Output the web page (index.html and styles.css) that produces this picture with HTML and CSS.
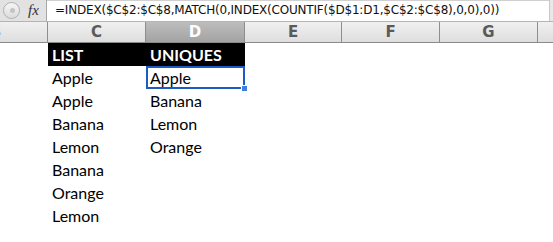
FILE: index.html
```html
<!DOCTYPE html>
<html lang="en">
<head>
  <meta charset="UTF-8">
  <title>Unique values formula</title>
  <link rel="stylesheet" href="styles.css">
</head>
<body>
  <div class="formula-bar">
    <div class="tools">
      <span class="cancel"><span class="dot"></span></span>
      <span class="fx">fx</span>
    </div>
    <div class="formula">=INDEX($C$2:$C$8,MATCH(0,INDEX(COUNTIF($D$1:D1,$C$2:$C$8),0,0),0))</div>
    <div class="edge"></div>
  </div>
  <div class="col-headers">
    <div class="col-head col-b">B</div>
    <div class="col-head col-c">C</div>
    <div class="col-head col-d selected">D</div>
    <div class="col-head col-e">E</div>
    <div class="col-head col-f">F</div>
    <div class="col-head col-g">G</div>
    <div class="col-head col-h"></div>
  </div>
  <div class="sheet">
    <div class="cell"></div><div class="cell head">LIST</div><div class="cell head">UNIQUES</div><div class="cell rest"></div>
    <div class="cell"></div><div class="cell">Apple</div><div class="cell active">Apple<span class="handle"></span></div><div class="cell rest"></div>
    <div class="cell"></div><div class="cell">Apple</div><div class="cell">Banana</div><div class="cell rest"></div>
    <div class="cell"></div><div class="cell">Banana</div><div class="cell">Lemon</div><div class="cell rest"></div>
    <div class="cell"></div><div class="cell">Lemon</div><div class="cell">Orange</div><div class="cell rest"></div>
    <div class="cell"></div><div class="cell">Banana</div><div class="cell"></div><div class="cell rest"></div>
    <div class="cell"></div><div class="cell">Orange</div><div class="cell"></div><div class="cell rest"></div>
    <div class="cell"></div><div class="cell">Lemon</div><div class="cell"></div><div class="cell rest"></div>
  </div>
</body>
</html>
```

FILE: styles.css
```css
body {
  margin: 0;
  background: #fff;
  overflow: hidden;
}
.formula-bar {
  display: flex;
  height: 21px;
  border-bottom: 1px solid #b4b4b4;
  background: #e2e2e2;
}
.tools {
  width: 46px;
  display: flex;
  align-items: center;
  border-right: 1px solid #a8a8a8;
}
.cancel {
  width: 15px;
  height: 15px;
  margin-left: 3px;
  border: 1px solid #b0b0b0;
  border-radius: 50%;
  background: linear-gradient(#f6f6f6, #dcdcdc);
  display: flex;
  align-items: center;
  justify-content: center;
}
.cancel .dot {
  width: 5px;
  height: 5px;
  border-radius: 50%;
  background: #c4c4c4;
  margin-left: 2px;
}
.fx {
  margin-left: 8px;
  font-family: "Liberation Serif", serif;
  font-style: italic;
  font-size: 15px;
  color: #333;
}
.formula {
  flex: 1;
  background: #fff;
  border-top: 1px solid #d0d0d0;
  padding-left: 8px;
  font-family: "DejaVu Sans", sans-serif;
  font-size: 12px;
  letter-spacing: -0.2px;
  line-height: 19px;
  color: #111;
  white-space: nowrap;
  overflow: hidden;
}
.edge {
  width: 3px;
  background: #e8e8e8;
  border-left: 1px solid #c8c8c8;
}
.col-headers {
  display: flex;
  height: 20px;
  border-bottom: 1px solid #8a8a8a;
  overflow: hidden;
}
.col-head {
  flex: none;
  box-sizing: border-box;
  border-right: 1px solid #8e8e8e;
  background: linear-gradient(#f0f0f0, #dedede);
  text-align: center;
  font-family: "DejaVu Sans", sans-serif;
  font-weight: bold;
  font-size: 15px;
  line-height: 20px;
  color: #5a5a5a;
}
.col-head.selected {
  background: linear-gradient(#bdbdbd, #a3a3a3);
  color: #fdfdfd;
}
.col-b { width: 104px; margin-left: -56px; }
.col-c { width: 98px; }
.col-d { width: 99px; }
.col-e { width: 97px; }
.col-f { width: 98px; }
.col-g { width: 98px; }
.col-h { width: 60px; border-right: none; }
.sheet {
  display: grid;
  grid-template-columns: 48px 98px 99px 1fr;
  grid-auto-rows: 23px;
  font-family: Lato, sans-serif;
  font-size: 16px;
  color: #000;
}
.cell {
  padding-left: 4px;
  line-height: 23px;
  white-space: nowrap;
}
.cell.head {
  background: #000;
  color: #fff;
  font-weight: bold;
}
.cell.active {
  position: relative;
  box-sizing: border-box;
  border: 2px solid #1d5bc4;
  padding-left: 2px;
  line-height: 19px;
}
.handle {
  position: absolute;
  right: -5px;
  bottom: -5px;
  width: 5px;
  height: 5px;
  background: #3f7fe0;
  border: 1px solid #fff;
}
```
